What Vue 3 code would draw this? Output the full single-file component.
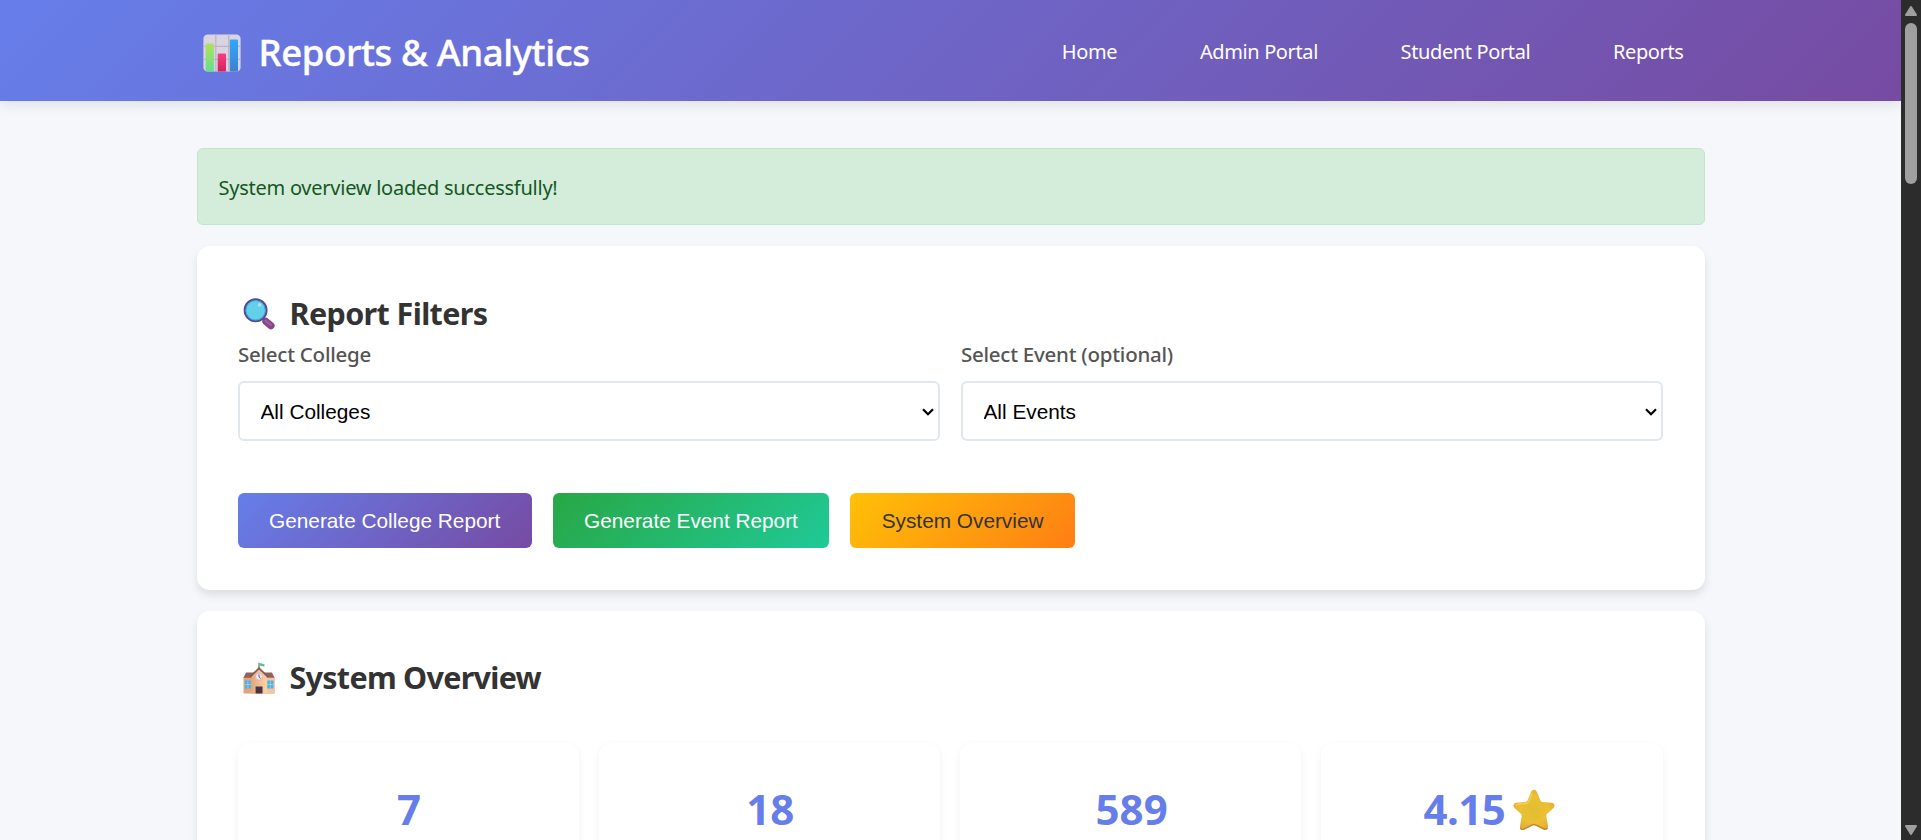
<script setup>
import { ref } from 'vue'

const links = ['Home', 'Admin Portal', 'Student Portal', 'Reports']
const filters = [
  { label: 'Select College', option: 'All Colleges' },
  { label: 'Select Event (optional)', option: 'All Events' }
]
const chosen = ref(filters.map((f) => f.option))
const actions = [
  { text: 'Generate College Report', kind: 'primary' },
  { text: 'Generate Event Report', kind: 'success' },
  { text: 'System Overview', kind: 'warning' }
]
const stats = [
  { value: '7' },
  { value: '18' },
  { value: '589' },
  { value: '4.15', star: true }
]
</script>

<template>
  <div class="window">
    <div class="page">
      <header class="header">
        <div class="bar">
          <h1 class="title">
            <svg class="chart" viewBox="0 0 38 38">
              <defs>
                <linearGradient id="gGreen" x1="0" y1="0" x2="0" y2="1">
                  <stop offset="0" stop-color="#b2e05c" /><stop offset="1" stop-color="#62df8e" />
                </linearGradient>
                <linearGradient id="gPink" x1="0" y1="0" x2="0" y2="1">
                  <stop offset="0" stop-color="#fb3d7c" /><stop offset="1" stop-color="#cf2560" />
                </linearGradient>
                <linearGradient id="gBlue" x1="0" y1="0" x2="0" y2="1">
                  <stop offset="0" stop-color="#2fa9fa" /><stop offset="1" stop-color="#4080cf" />
                </linearGradient>
              </defs>
              <rect x="0.4" y="0.4" width="37.2" height="37.2" rx="4.2" fill="#d9d3e2" />
              <path d="M12.8 .5V37.5M25.7 .5V37.5M.5 12.3H37.5M.5 25.4H37.5" stroke="#bdb5c8" stroke-width="1.3" fill="none" />
              <rect x="2.6" y="9.4" width="8.3" height="28.2" rx="1" fill="url(#gGreen)" />
              <rect x="14.7" y="19.5" width="8.3" height="18.1" rx="1" fill="url(#gPink)" />
              <rect x="26.8" y="5.4" width="8.2" height="32.2" rx="1" fill="url(#gBlue)" />
            </svg>
            <span>Reports &amp; Analytics</span>
          </h1>
          <nav class="nav">
            <a v-for="link in links" :key="link">{{ link }}</a>
          </nav>
        </div>
      </header>

      <main class="main">
        <div class="alert">System overview loaded successfully!</div>

        <section class="card">
          <h2 class="heading">
            <svg class="icon" viewBox="0 0 32 32">
              <path d="M19.5 19.5L22.8 22.8" stroke="#5b4a82" stroke-width="3" />
              <path d="M22.9 23.4L28 27.7" stroke="#85478a" stroke-width="7.2" stroke-linecap="round" />
              <path d="M22.4 22.6L28 27" stroke="#a15b9f" stroke-width="2.2" stroke-linecap="round" />
              <circle cx="12.6" cy="12.3" r="11" fill="#63d0ea" stroke="#544b8b" stroke-width="1.9" />
              <circle cx="12.6" cy="12.3" r="9.7" fill="none" stroke="#3a9fe0" stroke-width="0.9" />
              <circle cx="16.6" cy="6.9" r="1.8" fill="#b9d9fa" />
            </svg>
            <span>Report Filters</span>
          </h2>
          <div class="fields">
            <label v-for="(f, i) in filters" :key="f.label" class="field">
              <span class="label">{{ f.label }}</span>
              <span class="control">
                <select v-model="chosen[i]"><option>{{ f.option }}</option></select>
                <svg class="caret" viewBox="0 0 12 8"><path d="M1 1.3L6 6.2L11 1.3" fill="none" stroke="#000" stroke-width="2.2" /></svg>
              </span>
            </label>
          </div>
          <div class="actions">
            <button v-for="a in actions" :key="a.text" :class="a.kind">{{ a.text }}</button>
          </div>
        </section>

        <section class="card overview">
          <h2 class="heading">
            <svg class="icon" viewBox="0 0 32 32">
              <defs>
                <linearGradient id="gWall" x1="0" y1="0" x2="1" y2="0">
                  <stop offset="0" stop-color="#e4a57c" /><stop offset="1" stop-color="#fdd3a4" />
                </linearGradient>
              </defs>
              <rect x="0.5" y="15" width="31" height="16.5" fill="#e8a078" />
              <rect x="23" y="15" width="8.5" height="16.5" fill="#f9c29e" />
              <path d="M3 10.4H29L31.5 15.8H0.5Z" fill="#8f615e" />
              <path d="M8.2 31.5V13.5L16 6L23.8 13.5V31.5Z" fill="url(#gWall)" />
              <path d="M7.4 14.6L16 6.2L24.6 14.6" fill="none" stroke="#875650" stroke-width="1.7" />
              <path d="M16 6V.8" stroke="#704c55" stroke-width="1" />
              <path d="M16.5 1.2C18.5 .6 19 2.6 21.4 1.8V4.4C19 5 18.5 3.4 16.5 4Z" fill="#48cf79" />
              <circle cx="16" cy="14.6" r="3.5" fill="#f0e5f2" stroke="#c9a9ac" stroke-width="0.6" />
              <path d="M16 12.4V14.9L17.6 16.4" fill="none" stroke="#5b4666" stroke-width="0.9" />
              <rect x="12.6" y="24.5" width="6.9" height="7" fill="#453548" />
              <path d="M2 18.5H7.8V26.5H2ZM24.4 18.5H30.4V26.5H24.4Z" fill="#3fb4ef" />
              <path d="M4.9 18.5V26.5M2 22.5H7.8M27.4 18.5V26.5M24.4 22.5H30.4" stroke="#a8cfe0" stroke-width="0.8" />
            </svg>
            <span>System Overview</span>
          </h2>
          <div class="stats">
            <div v-for="s in stats" :key="s.value" class="stat" :class="{ rating: s.star }">
              <span>{{ s.value }}</span>
              <svg v-if="s.star" class="star" viewBox="0 0 43 43">
                <defs>
                  <radialGradient id="gStar" cx="0.5" cy="0.5" r="0.55">
                    <stop offset="0" stop-color="#e0bd32" /><stop offset="0.6" stop-color="#ebc034" /><stop offset="1" stop-color="#e3ab35" />
                  </radialGradient>
                </defs>
                <path d="M18.5 3C20 .1 23 .1 24.5 3L28 11.2C28.5 12.6 29.3 13.2 30.8 13.4L39.5 14.2C42.7 14.6 43.5 17.4 41.2 19.6L35.2 25.2C34.2 26.2 34 27 34.2 28.4L35.8 37.8C36.2 41.3 34 42.9 31 41.4L23.4 37.5C22 36.9 21 36.9 19.6 37.5L12 41.4C9 42.9 6.8 41.3 7.2 37.8L8.8 28.4C9 27 8.8 26.2 7.8 25.2L1.8 19.6C-.5 17.4 .3 14.6 3.5 14.2L12.2 13.4C13.7 13.2 14.5 12.6 15 11.2Z" fill="url(#gStar)" />
                <path d="M8 39.5C7.5 41.5 9.5 42 12 40.6L19.6 36.7C21 36.1 22 36.1 23.4 36.7L31 40.6C33 41.6 34.5 41.2 35 39.8" fill="none" stroke="#c08a30" stroke-width="1.4" />
                <path d="M2.5 16.5C4 15.6 9 15.3 13 15C15 14.7 16 13.8 16.6 12L19.5 4.5" fill="none" stroke="#f6cf4c" stroke-width="1.6" />
              </svg>
            </div>
          </div>
        </section>
      </main>
    </div>

    <div class="scrollbar">
      <svg viewBox="0 0 12 10"><path d="M6 1L11 9H1Z" fill="#9f9f9f" stroke="#9f9f9f" stroke-width="2" stroke-linejoin="round" /></svg>
      <div class="thumb"></div>
      <svg viewBox="0 0 12 10"><path d="M6 9L11 1H1Z" fill="#9f9f9f" stroke="#9f9f9f" stroke-width="2" stroke-linejoin="round" /></svg>
    </div>
  </div>
</template>

<style>
html, body { margin: 0; overflow: hidden; }
</style>

<style scoped>
* { box-sizing: border-box; }
.window {
  display: flex;
  height: 840px;
  overflow: hidden;
  background: #f5f7fb;
  font-family: "Segoe UI", "Noto Sans", sans-serif;
  font-size: 20px;
  letter-spacing: -0.25px;
}
.page { flex: 1; min-width: 0; height: 840px; overflow: hidden; }
.header {
  height: 101px;
  background: linear-gradient(135deg, #667eea 0%, #764ba2 100%);
  box-shadow: 0 3px 13px rgba(0, 0, 0, 0.1);
  color: #fff;
}
.bar {
  display: flex;
  align-items: center;
  justify-content: space-between;
  width: 1508px;
  height: 101px;
  margin: 0 auto;
  padding: 0 21px 0 6px;
}
.title {
  display: flex;
  align-items: center;
  margin: 0;
  font-size: 36.5px;
  font-weight: 500;
  line-height: 50px;
  letter-spacing: -0.38px;
  -webkit-text-stroke: 0.4px #fff;
}
.title span { padding-top: 3px; }
.chart { width: 38px; height: 38px; margin: 4px 18px 0 0; }
.nav { display: flex; gap: 82.7px; padding-top: 2px; line-height: 28px; letter-spacing: -0.38px; }

.main { width: 1508px; margin: 47px auto 0; }
.alert {
  height: 77px;
  margin-bottom: 21px;
  padding: 25px 21px 23px;
  border: 1px solid #c3e6cb;
  border-radius: 6px;
  background: #d4edda;
  color: #155724;
  line-height: 28px;
}
.card {
  height: 344px;
  margin-bottom: 21px;
  padding: 41px 42px 41px 41px;
  border-radius: 13px;
  background: #fff;
  box-shadow: 0 5px 8px rgba(0, 0, 0, 0.1);
}
.overview { height: 400px; }
.heading {
  display: flex;
  align-items: center;
  height: 52px;
  margin: 0;
  color: #333;
  font-size: 30.5px;
  font-weight: 700;
  line-height: 52px;
  letter-spacing: -0.62px;
}
.icon { width: 32px; height: 32px; margin: 1px 14.5px 0 5.5px; }
.fields { display: grid; grid-template-columns: 1fr 1fr; gap: 21px; }
.label {
  display: block;
  height: 42px;
  padding-left: 0.5px;
  color: #555;
  font-size: 20.5px;
  font-weight: 500;
  line-height: 30px;
  letter-spacing: -0.25px;
}
.control { position: relative; display: block; }
select {
  display: block;
  width: 100%;
  height: 60px;
  padding: 0 21px;
  appearance: none;
  border: 2px solid #e1e8ed;
  border-radius: 6px;
  background: #fff;
  color: #000;
  font: 20.8px "Liberation Sans", Arial, sans-serif;
}
.caret { position: absolute; right: 6px; top: 27px; width: 12px; height: 8px; }
.actions { display: flex; gap: 20.8px; margin-top: 52px; }
button {
  height: 55px;
  padding: 0 31.5px;
  border: 0;
  border-radius: 6px;
  color: #fff;
  font: 20.8px "Liberation Sans", Arial, sans-serif;
}
.primary { background: linear-gradient(135deg, #667eea 0%, #764ba2 100%); }
.success { background: linear-gradient(135deg, #28a745 0%, #20c997 100%); }
.warning { background: linear-gradient(135deg, #ffc107 0%, #fd7e14 100%); color: #333; }

.overview .heading { height: 50px; line-height: 50px; letter-spacing: -0.72px; }
.stats { display: grid; grid-template-columns: repeat(4, 1fr); gap: 20px; margin-top: 41px; }
.stat {
  display: flex;
  justify-content: center;
  align-items: flex-start;
  height: 190px;
  padding: 37px 0 0 2px;
  border-radius: 13px;
  background: #fff;
  box-shadow: 0 3px 8px rgba(0, 0, 0, 0.06);
  color: #667eea;
  font-size: 42px;
  font-weight: 700;
  line-height: 58px;
  letter-spacing: 0;
}
.rating { padding-left: 0; letter-spacing: -0.5px; }
.star { width: 42px; height: 42px; margin: 9px 5px 0 8px; }

.scrollbar {
  display: flex;
  flex-direction: column;
  align-items: center;
  width: 20px;
  padding: 6px 0 5px;
  background: #2c2c2c;
}
.scrollbar svg { width: 12px; height: 10px; }
.thumb { width: 12px; height: 161px; margin: 7px 0 auto; border-radius: 6px; background: #9f9f9f; }
</style>
